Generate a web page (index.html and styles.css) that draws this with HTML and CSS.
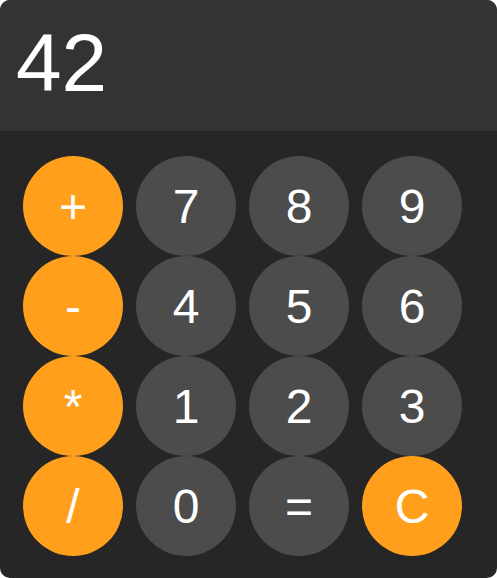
FILE: index.html
```html
<!DOCTYPE html>
<html>
<head>
<meta charset="utf-8">
<link rel="stylesheet" href="styles.css">
</head>
<body>
<div class="calc">
  <div class="display">42</div>
  <div class="keys">
    <button class="key op">+</button>
    <button class="key">7</button>
    <button class="key">8</button>
    <button class="key">9</button>
    <button class="key op">-</button>
    <button class="key">4</button>
    <button class="key">5</button>
    <button class="key">6</button>
    <button class="key op">*</button>
    <button class="key">1</button>
    <button class="key">2</button>
    <button class="key">3</button>
    <button class="key op">/</button>
    <button class="key">0</button>
    <button class="key">=</button>
    <button class="key op">C</button>
  </div>
</div>
</body>
</html>
```
FILE: styles.css
```css
html, body {
  margin: 0;
  padding: 0;
  background: #ffffff;
}
body {
  font-family: "Liberation Sans", Arial, sans-serif;
}
.calc {
  width: 497px;
  height: 578px;
  border-radius: 10px;
  overflow: hidden;
  background: #262626;
}
.display {
  box-sizing: border-box;
  height: 131px;
  padding: 16px 16px 0 16px;
  background: #333333;
  color: #ffffff;
  font-size: 82px;
  line-height: normal;
}
.keys {
  display: grid;
  grid-template-columns: repeat(4, 100px);
  grid-auto-rows: 100px;
  column-gap: 13px;
  row-gap: 0;
  padding: 25px 0 0 23px;
}
.key {
  width: 100px;
  height: 100px;
  border: none;
  border-radius: 50%;
  background: #4c4c4c;
  color: #ffffff;
  font-family: "Liberation Sans", Arial, sans-serif;
  font-size: 48px;
  padding: 0;
  display: flex;
  align-items: center;
  justify-content: center;
}
.key.op {
  background: #ff9f1c;
}
```
